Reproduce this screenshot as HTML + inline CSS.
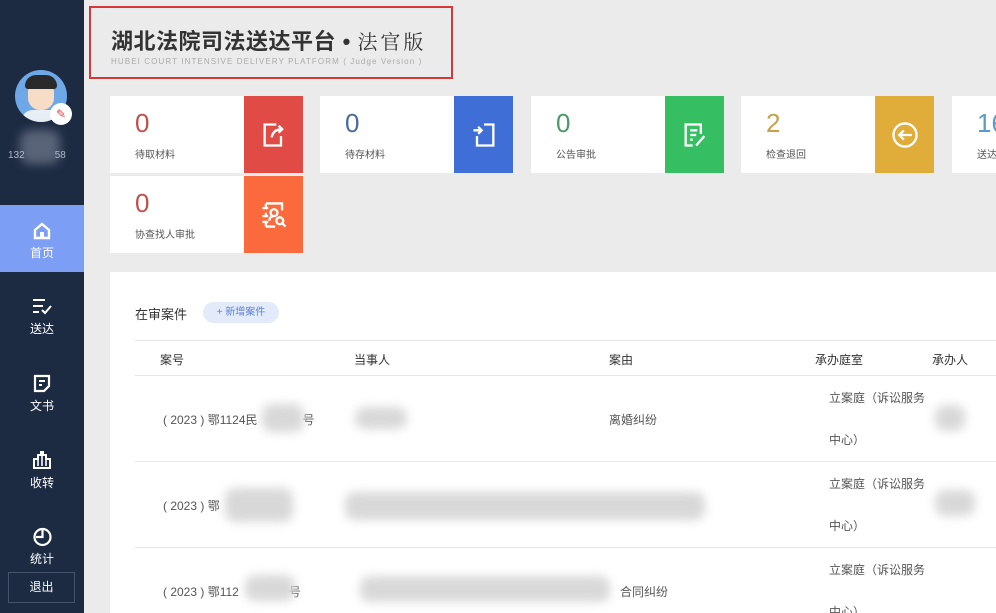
<!DOCTYPE html>
<html><head><meta charset="utf-8"><style>
*{margin:0;padding:0;box-sizing:border-box}
html,body{width:996px;height:613px;overflow:hidden}
body{background:#ebebeb;font-family:"Liberation Sans","Noto Sans CJK SC",sans-serif}
#w{position:relative;width:996px;height:613px;overflow:hidden}
.sb{position:absolute;left:0;top:0;width:84px;height:613px;background:#1c2a42}
.nav{position:absolute;left:0;width:84px;text-align:center;color:#fff;font-size:12px}
.nav svg{display:block;margin:0 auto 3px}
.hdr{position:absolute;left:89px;top:6px;width:364px;height:73px;border:2px solid #d23a3a}
.t1{position:absolute;left:20px;top:16px;font-size:22px;font-weight:bold;color:#333;letter-spacing:0.5px;white-space:nowrap}
.t1 span{font-family:"Noto Serif CJK SC",serif;font-weight:normal;font-size:20px;letter-spacing:3px}
.t2{position:absolute;left:20px;top:49px;font-size:8px;color:#aaa;letter-spacing:1.1px;white-space:nowrap}
.card{position:absolute;width:193px;height:77px;background:#fff}
.card .n{position:absolute;left:25px;top:12px;font-size:26px}
.card .l{position:absolute;left:25px;top:50px;font-size:10px;color:#555}
.card .ic{position:absolute;right:0;top:0;width:59px;height:77px;display:flex;align-items:center;justify-content:center}
.panel{position:absolute;left:110px;top:272px;width:886px;height:341px;background:#fff}
.th{position:absolute;top:351px;font-size:12px;color:#333}
.td{position:absolute;font-size:12px;color:#555;white-space:nowrap}
.line{position:absolute;left:135px;width:861px;height:1px;background:#e6e6e6}
.blur{position:absolute;background:#d8d8d8;filter:blur(5px);border-radius:10px}
</style></head><body><div id="w">
<div class="sb"></div>
<div style="position:absolute;left:15px;top:70px;width:52px;height:52px;border-radius:50%;background:#6fa8e6;overflow:hidden">
<div style="position:absolute;left:13px;top:12px;width:26px;height:28px;background:#f7dcc6;border-radius:10px 10px 12px 12px"></div>
<div style="position:absolute;left:10px;top:5px;width:32px;height:14px;background:#2a2a2a;border-radius:14px 14px 4px 4px"></div>
<div style="position:absolute;left:6px;top:40px;width:40px;height:20px;background:#e8eef5;border-radius:12px 12px 0 0"></div>
</div>
<div style="position:absolute;left:50px;top:103px;width:22px;height:22px;border-radius:50%;background:#fff;color:#d44;font-size:12px;text-align:center;line-height:22px">✎</div>
<div class="blur" style="left:20px;top:130px;width:40px;height:34px;background:#5a6478"></div>
<div style="position:absolute;left:8px;top:150px;font-size:10px;color:#b0b8c8">132<span style="margin-left:30px">58</span></div>
<div style="position:absolute;left:0;top:205px;width:84px;height:67px;background:#7c9ef4"></div>
<div class="nav" style="top:221px"><svg width="20" height="20" viewBox="0 0 20 20"><path d="M3 9L10 3l7 6v8H3z" fill="none" stroke="#fff" stroke-width="2.4"/><rect x="8" y="11" width="4" height="6" fill="#fff"/></svg>首页</div>
<div class="nav" style="top:297px"><svg width="22" height="20" viewBox="0 0 22 20"><path d="M2 3h12M2 9h10M2 15h6M11 13l3 3 6-7" fill="none" stroke="#fff" stroke-width="2"/></svg>送达</div>
<div class="nav" style="top:373px"><svg width="20" height="21" viewBox="0 0 20 21"><path d="M3 3h14v10l-5 5H3z" fill="none" stroke="#fff" stroke-width="2.2"/><path d="M7 8h6M7 12h3" stroke="#fff" stroke-width="2"/></svg>文书</div>
<div class="nav" style="top:450px"><svg width="22" height="21" viewBox="0 0 22 21"><path d="M3 18V9h4V5h3V2h2v3h3v4h4v9z" fill="none" stroke="#fff" stroke-width="2"/><path d="M7 10v6M11 6v10M15 10v6" stroke="#fff" stroke-width="1.6"/></svg>收转</div>
<div class="nav" style="top:526px"><svg width="21" height="21" viewBox="0 0 21 21"><circle cx="10.5" cy="11" r="8" fill="none" stroke="#fff" stroke-width="2.2"/><path d="M10.5 3v8H4" fill="none" stroke="#fff" stroke-width="2.2"/></svg>统计</div>
<div style="position:absolute;left:8px;top:572px;width:67px;height:31px;border:1px solid #44526b;color:#fff;font-size:12px;text-align:center;line-height:29px">退出</div>

<div class="hdr"><div class="t1">湖北法院司法送达平台 • <span>法官版</span></div>
<div class="t2">HUBEI COURT INTENSIVE DELIVERY PLATFORM ( Judge Version )</div></div>

<div class="card" style="left:110px;top:96px"><div class="n" style="color:#c0504d">0</div><div class="l">待取材料</div><div class="ic" style="background:#e04c45"><svg width="28" height="28" viewBox="0 0 24 24" fill="none" stroke="#fff" stroke-width="2"><path d="M14 3H4v18h14v-8"/><path d="M10 14c1-5 4-7 9-7M16 4l3 3-3 3"/></svg></div></div>
<div class="card" style="left:320px;top:96px"><div class="n" style="color:#4a6aa0">0</div><div class="l">待存材料</div><div class="ic" style="background:#3f6fd6"><svg width="28" height="28" viewBox="0 0 24 24" fill="none" stroke="#fff" stroke-width="2"><path d="M12 3h8v18H6v-8"/><path d="M3 8h7M7 5l3 3-3 3"/></svg></div></div>
<div class="card" style="left:531px;top:96px"><div class="n" style="color:#4a9a68">0</div><div class="l">公告审批</div><div class="ic" style="background:#35bf62"><svg width="28" height="28" viewBox="0 0 24 24" fill="none" stroke="#fff" stroke-width="2"><path d="M17 11V3H4v18h6"/><path d="M8 8h6M8 12h5M8 16h2M13 21l7-8"/></svg></div></div>
<div class="card" style="left:741px;top:96px"><div class="n" style="color:#c8a14a">2</div><div class="l">检查退回</div><div class="ic" style="background:#e0ad3a"><svg width="30" height="30" viewBox="0 0 26 26" fill="none" stroke="#fff" stroke-width="2"><circle cx="13" cy="13" r="10"/><path d="M19 13H8M12 9l-4 4 4 4"/></svg></div></div>
<div class="card" style="left:952px;top:96px"><div class="n" style="color:#5b9bc5">16</div><div class="l">送达</div></div>
<div class="card" style="left:110px;top:176px"><div class="n" style="color:#c0504d">0</div><div class="l">协查找人审批</div><div class="ic" style="background:#fa6a3c"><svg width="30" height="30" viewBox="0 0 26 26" fill="none" stroke="#fff" stroke-width="2"><path d="M6 3h14v6M6 23h8M6 3v4M6 11v3M6 18v5M3 7h5M3 14h5M3 19h5"/><circle cx="13" cy="11" r="3"/><path d="M9 18c0-3 2-4 4-4"/><circle cx="18" cy="18" r="3"/><path d="M20 20l3 3"/></svg></div></div>

<div class="panel"></div>
<div style="position:absolute;left:135px;top:304px;font-size:13px;color:#333">在审案件</div>
<div style="position:absolute;left:203px;top:302px;width:76px;height:21px;border-radius:11px;background:#e3ebfa;color:#5b82d6;font-size:10px;text-align:center;line-height:21px">+ 新增案件</div>
<div class="line" style="top:340px"></div>
<div class="th" style="left:160px">案号</div><div class="th" style="left:354px">当事人</div><div class="th" style="left:609px">案由</div><div class="th" style="left:815px">承办庭室</div><div class="th" style="left:932px">承办人</div>
<div class="line" style="top:375px"></div>
<div class="td" style="left:163px;top:411px">( 2023 ) 鄂1124民<span style="margin-left:45px">号</span></div>
<div class="blur" style="left:262px;top:404px;width:42px;height:28px"></div>
<div class="blur" style="left:355px;top:407px;width:52px;height:22px"></div>
<div class="td" style="left:609px;top:411px">离婚纠纷</div>
<div class="td" style="left:829px;top:377px;line-height:42px">立案庭（诉讼服务<br>中心）</div>
<div class="blur" style="left:935px;top:405px;width:30px;height:26px"></div>
<div class="line" style="top:461px"></div>
<div class="td" style="left:163px;top:497px">( 2023 ) 鄂</div>
<div class="blur" style="left:225px;top:488px;width:68px;height:34px"></div>
<div class="blur" style="left:345px;top:492px;width:360px;height:28px"></div>
<div class="td" style="left:829px;top:463px;line-height:42px">立案庭（诉讼服务<br>中心）</div>
<div class="blur" style="left:935px;top:490px;width:40px;height:26px"></div>
<div class="line" style="top:547px"></div>
<div class="td" style="left:163px;top:583px">( 2023 ) 鄂112<span style="margin-left:50px">号</span></div>
<div class="blur" style="left:245px;top:575px;width:50px;height:26px"></div>
<div class="blur" style="left:360px;top:576px;width:250px;height:26px"></div>
<div class="td" style="left:620px;top:583px">合同纠纷</div>
<div class="td" style="left:829px;top:549px;line-height:42px">立案庭（诉讼服务<br>中心）</div>
</div></body></html>
